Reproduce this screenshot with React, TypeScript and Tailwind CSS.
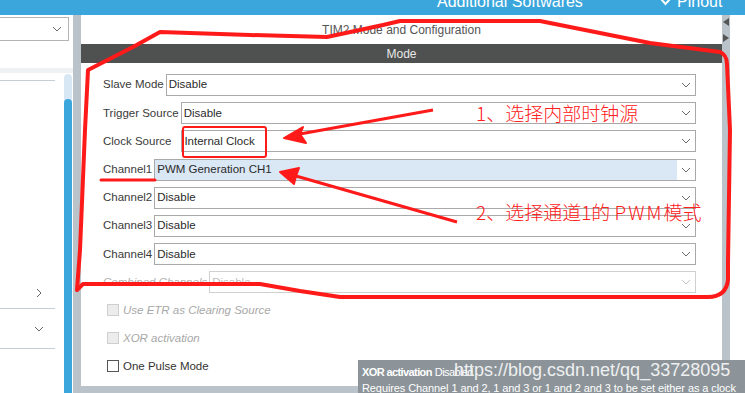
import React from 'react';

const Chevron = ({ light = false }: { light?: boolean }) => (
  <svg width="10" height="6" viewBox="0 0 10 6" className="shrink-0">
    <path d="M1 1 L5 5 L9 1" fill="none" stroke={light ? '#c4c4c4' : '#6b6b6b'} strokeWidth="1" />
  </svg>
);

const Field = ({ label, value, selected = false, disabled = false }: { label: string; value: string; selected?: boolean; disabled?: boolean }) => (
  <div className="flex items-center h-[22px]">
    <span className={`pr-[2px] whitespace-nowrap ${disabled ? 'italic text-[#b0b0b0]' : 'text-[#3a3a3a]'}`}>{label}</span>
    <div className={`flex-1 h-full flex items-center border ${disabled ? 'border-[#d0d0d0]' : 'border-[#a9a9a9]'} ${selected ? 'bg-[#dae7f4]' : 'bg-white'}`}>
      <span className={`flex-1 pl-[2px] whitespace-nowrap ${disabled ? 'text-[#c0c0c0]' : 'text-[#2a2a2a]'}`}>{value}</span>
      <div className="w-[18px] h-full bg-white flex items-center justify-center">
        <Chevron light={disabled} />
      </div>
    </div>
  </div>
);

const Check = ({ label, disabled = false }: { label: string; disabled?: boolean }) => (
  <div className="flex items-center gap-[4px] h-[14px]">
    <div className={`w-[12px] h-[12px] border ${disabled ? 'border-[#cfcfcf] bg-[#ececec]' : 'border-[#555] bg-white'}`} />
    <span className={disabled ? 'italic text-[#a8a8a8]' : 'text-[#333]'}>{label}</span>
  </div>
);

export default function App() {
  return (
    <div className="relative w-[745px] h-[393px] overflow-hidden bg-white font-['Liberation_Sans',Arial,sans-serif] text-[11.5px]">
      {/* top bar */}
      <div className="h-[15px] bg-[#3aa6db] relative overflow-hidden text-white">
        <span className="absolute left-[437px] top-[-8px] text-[16px] leading-[20px] whitespace-nowrap">Additional Softwares</span>
        <span className="absolute left-[660px] top-[-8px] text-[16px] leading-[20px] flex items-center gap-[6px] whitespace-nowrap">
          <svg width="11" height="8" viewBox="0 0 11 8"><path d="M1 1 L5.5 6 L10 1" fill="none" stroke="white" strokeWidth="2" /></svg>
          Pinout
        </span>
      </div>

      <div className="flex h-[378px]">
        {/* left panel */}
        <div className="w-[73px] flex flex-col">
          <div className="mt-[2px] h-[24px] w-[69px] border border-[#b4b4b4] border-l-0 flex items-center justify-end pr-[6px]">
            <Chevron />
          </div>
          <div className="h-[27px]" />
          <div className="h-[5px] bg-[#eef2f5]" />
          <div className="flex-1 flex">
            <div className="w-[64px] flex flex-col">
              <div className="mt-[7px] h-px w-[55px] bg-[#c6ced3]" />
              <div className="flex-1" />
              <div className="h-[30px] w-[55px] flex items-center justify-end pr-[13px] text-[#555]">
                <svg width="6" height="10" viewBox="0 0 6 10"><path d="M1 1 L5 5 L1 9" fill="none" stroke="#666" strokeWidth="1" /></svg>
              </div>
              <div className="h-px w-[55px] bg-[#c6ced3]" />
              <div className="h-[39px] w-[55px] flex items-center justify-end pr-[11px]">
                <svg width="10" height="6" viewBox="0 0 10 6"><path d="M1 1 L5 5 L9 1" fill="none" stroke="#666" strokeWidth="1" /></svg>
              </div>
              <div className="h-px w-[55px] bg-[#c6ced3]" />
              <div className="h-[44px]" />
            </div>
            <div className="w-[8px] mt-[1px] rounded-t-[4px] bg-[#d7e7f3] flex flex-col">
              <div className="mt-[25px] flex-1 rounded-t-[4px] bg-[#3aa6db]" />
            </div>
          </div>
        </div>

        {/* separator */}
        <div className="w-[8px] bg-[#b9c3c9]" />

        {/* main */}
        <div className="w-[641px] flex flex-col">
          <div className="h-[29px] flex items-center justify-center text-[#555] text-[12px]">TIM2 Mode and Configuration</div>
          <div className="h-[19px] bg-[#4f5150] flex items-center justify-center text-[#e8e8e8] text-[12px]">Mode</div>
          <div className="flex-1 flex flex-col pl-[22px] pr-[26px] pt-[11px]">
            <div className="flex flex-col gap-[6.2px]">
              <Field label="Slave Mode" value="Disable" />
              <Field label="Trigger Source" value="Disable" />
              <div className="flex items-center h-[22px]">
                <span className="pr-[10px] whitespace-nowrap text-[#3a3a3a]">Clock Source</span>
                <div className="flex-1 h-full flex items-center border border-[#a9a9a9] bg-white">
                  <span className="flex-1 pl-[2px] text-[#2a2a2a]">Internal Clock</span>
                  <div className="w-[18px] flex justify-center"><Chevron /></div>
                </div>
              </div>
              <Field label="Channel1" value="PWM Generation CH1" selected />
              <Field label="Channel2" value="Disable" />
              <Field label="Channel3" value="Disable" />
              <Field label="Channel4" value="Disable" />
              <Field label="Combined Channels" value="Disable" disabled />
            </div>
            <div className="flex flex-col gap-[14px] mt-[10px] pl-[4px]">
              <Check label="Use ETR as Clearing Source" disabled />
              <Check label="XOR activation" disabled />
              <Check label="One Pulse Mode" />
            </div>
          </div>
          <div className="h-[7px] bg-[#b9c3c9]" />
        </div>

        {/* right strip */}
        <div className="w-[8px] bg-[#b9c3c9] flex flex-col items-center pt-[3px] gap-[8px]">
          <svg width="6" height="8" viewBox="0 0 6 8"><path d="M6 0 L0 4 L6 8 Z" fill="#555" /></svg>
          <svg width="6" height="8" viewBox="0 0 6 8"><path d="M0 0 L6 4 L0 8 Z" fill="#555" /></svg>
        </div>
        <div className="flex-1 bg-white" />
      </div>

      {/* annotations */}
      <svg className="absolute inset-0 pointer-events-none" width="745" height="393" viewBox="0 0 745 393">
        <path
          d="M88 70 L133 47 L160 32 L250 35 L327 37 L383 25 L400 21 L540 21 L600 33 L650 43 L720 52 Q727 55 727 64 L730 130 L728 262 L728 280 Q726 297 708 297 L340 297 L300 291 L260 284 L83 284 L77 290 L80 250 L85 130 Z"
          fill="none" stroke="#ff1a1a" strokeWidth="4" strokeLinejoin="round"
        />
        <rect x="183" y="127" width="83" height="30" fill="none" stroke="#ff1a1a" strokeWidth="2" rx="2" />
        <line x1="101" y1="180" x2="155" y2="180" stroke="#ff1a1a" strokeWidth="3" strokeLinecap="round" />
        <path d="M433 110 L300 134" stroke="#ff1a1a" strokeWidth="3" />
        <path d="M284 138 L303 127 L300 134 L306 143 Z" fill="#ff1a1a" stroke="#ff1a1a" strokeWidth="2" strokeLinejoin="round" />
        <path d="M457 222 L296 176" stroke="#ff1a1a" strokeWidth="3" />
        <path d="M280 172 L299 168 L296 176 L294 184 Z" fill="#ff1a1a" stroke="#ff1a1a" strokeWidth="2" strokeLinejoin="round" />
      </svg>
      <span className="absolute left-[476px] top-[101px] text-[19px] leading-[24px] text-[#ff2020] whitespace-nowrap font-['Noto_Sans_CJK_SC',sans-serif] font-light">1、选择内部时钟源</span>
      <span className="absolute left-[476px] top-[200px] text-[19px] leading-[24px] text-[#ff2020] whitespace-nowrap font-['Noto_Sans_CJK_SC',sans-serif] font-light">
        2、选择通道1的 <span className="tracking-[2px]">PWM</span>模式
      </span>

      {/* tooltip */}
      <div className="absolute left-[358px] top-[360px] w-[400px] h-[40px] bg-[#8c9499] text-white px-[4px] pt-[5px] leading-[14px] text-[11px]">
        <div className="relative whitespace-nowrap h-[14px] tracking-[-0.6px]">
          <span className="font-bold">XOR activation</span>
          <span className="ml-[3px]">Disabled</span>
          <span className="absolute left-[92px] top-[-5px] text-[18px] leading-[20px] tracking-normal text-[#eef0f1]">https://blog.csdn.net/qq_33728095</span>
        </div>
        <div className="whitespace-nowrap mt-[2px] tracking-[-0.1px]">Requires Channel 1 and 2, 1 and 3 or 1 and 2 and 3 to be set either as a clock</div>
      </div>
    </div>
  );
}
